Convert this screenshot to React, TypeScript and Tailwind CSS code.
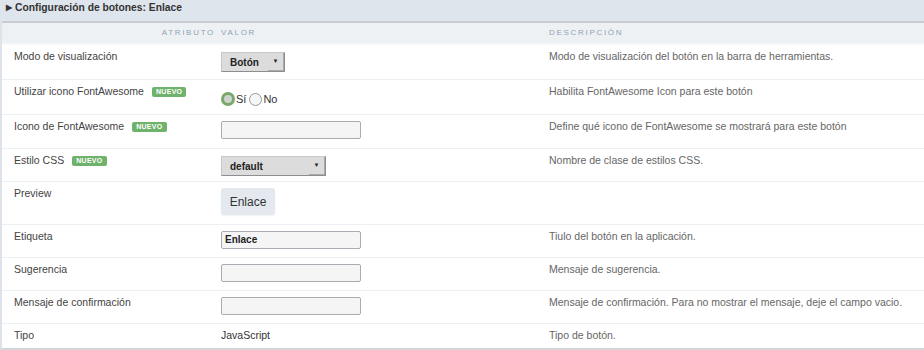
import React from "react";

const Badge = () => (
  <span className="ml-[8px] inline-block rounded-[2px] bg-[#6fb26c] px-[4px] text-[7px] font-bold leading-[10px] tracking-[0.3px] text-white align-[1px]">
    NUEVO
  </span>
);

const Select = ({ label, width }: { label: string; width: string }) => (
  <div
    className={`mt-[7px] flex h-[20px] ${width} items-center justify-between border border-t-[#c8c8c8] border-l-[#c8c8c8] border-r-[#8e8e8e] border-b-[#8e8e8e] bg-[#dcdcdc] pl-[8px] text-[10px] font-bold text-[#222]`}
  >
    <span>{label}</span>
    <span className="flex h-full w-[16px] items-center justify-center border-b border-r border-[#aaa] text-[6px]">
      ▼
    </span>
  </div>
);

const Input = ({ value }: { value?: string }) => (
  <div className="mt-[6px] h-[18px] w-[140px] rounded-[2px] border border-[#a8acb2] bg-[#f5f5f5] pl-[3px] text-[10px] font-bold leading-[16px] text-[#222]">
    {value}
  </div>
);

const Row = ({
  label,
  badge,
  value,
  desc,
  h,
}: {
  label: string;
  badge?: boolean;
  value: React.ReactNode;
  desc?: string;
  h: string;
}) => (
  <div className={`grid grid-cols-[219px_328px_1fr] border-b border-[#edf0f3] ${h}`}>
    <div className="pl-[12px] pt-[5px] text-[10.5px] leading-[13px] text-[#444]">
      {label}
      {badge && <Badge />}
    </div>
    <div>{value}</div>
    <div className="pt-[5px] text-[10.5px] leading-[13px] text-[#666]">{desc}</div>
  </div>
);

export default function App() {
  return (
    <div className="h-[350px] w-[924px] bg-white font-['Liberation_Sans',Arial,sans-serif]">
      <div className="flex h-[21px] items-start bg-[#dfe5ec] pl-[6px] pt-[1px] text-[10.3px] font-bold leading-[13px] text-[#333]">
        <span className="mr-[3px] text-[8px]">▶</span>
        Configuración de botones: Enlace
      </div>
      <div className="border-l-2 border-b-2 border-l-[#dde3e8] border-b-[#d4d6d9]">
        <div className="grid h-[24px] grid-cols-[219px_328px_1fr] border-t-2 border-b-2 border-t-[#c9cdd1] border-b-[#f6f8fa] bg-[#eef1f4] text-[8px] leading-[20px] tracking-[1.7px] text-[#8fa3b4]">
          <div className="pr-[6px] text-right">ATRIBUTO</div>
          <div>VALOR</div>
          <div>DESCRIPCIÓN</div>
        </div>
        <Row
          h="h-[35px]"
          label="Modo de visualización"
          value={<Select label="Botón" width="w-[64px]" />}
          desc="Modo de visualización del botón en la barra de herramientas."
        />
        <Row
          h="h-[35px]"
          label="Utilizar icono FontAwesome"
          badge
          value={
            <div className="mt-[9px] flex items-end text-[11px] text-[#333]">
              <span className="h-[14px] w-[14px] rounded-full border-[3px] border-[#7aa86a] bg-[#cfd3cf]" />
              <span className="ml-[1px] translate-y-[2px]">Sí</span>
              <span className="ml-[3px] h-[13px] w-[13px] rounded-full border border-[#999] bg-[#f6f6f6]" />
              <span className="ml-[1px] translate-y-[2px]">No</span>
            </div>
          }
          desc="Habilita FontAwesome Icon para este botón"
        />
        <Row
          h="h-[34px]"
          label="Icono de FontAwesome"
          badge
          value={<Input />}
          desc="Define qué icono de FontAwesome se mostrará para este botón"
        />
        <Row
          h="h-[33px]"
          label="Estilo CSS"
          badge
          value={<Select label="default" width="w-[105px]" />}
          desc="Nombre de clase de estilos CSS."
        />
        <Row
          h="h-[43px]"
          label="Preview"
          value={
            <div className="mt-[6px] flex h-[27px] w-[54px] items-center justify-center rounded-[3px] bg-[#e3e9ef] text-[12px] text-[#333] shadow-[0_1px_2px_rgba(0,0,0,0.06)]">
              Enlace
            </div>
          }
        />
        <Row
          h="h-[33px]"
          label="Etiqueta"
          value={<Input value="Enlace" />}
          desc="Tiulo del botón en la aplicación."
        />
        <Row
          h="h-[33px]"
          label="Sugerencia"
          value={<Input />}
          desc="Mensaje de sugerencia."
        />
        <Row
          h="h-[33px]"
          label="Mensaje de confirmación"
          value={<Input />}
          desc="Mensaje de confirmación. Para no mostrar el mensaje, deje el campo vacio."
        />
        <div className="grid h-[24px] grid-cols-[219px_328px_1fr] text-[10.5px] leading-[13px]">
          <div className="pl-[12px] pt-[5px] text-[#444]">Tipo</div>
          <div className="pt-[5px] text-[#333]">JavaScript</div>
          <div className="pt-[5px] text-[#666]">Tipo de botón.</div>
        </div>
      </div>
    </div>
  );
}
